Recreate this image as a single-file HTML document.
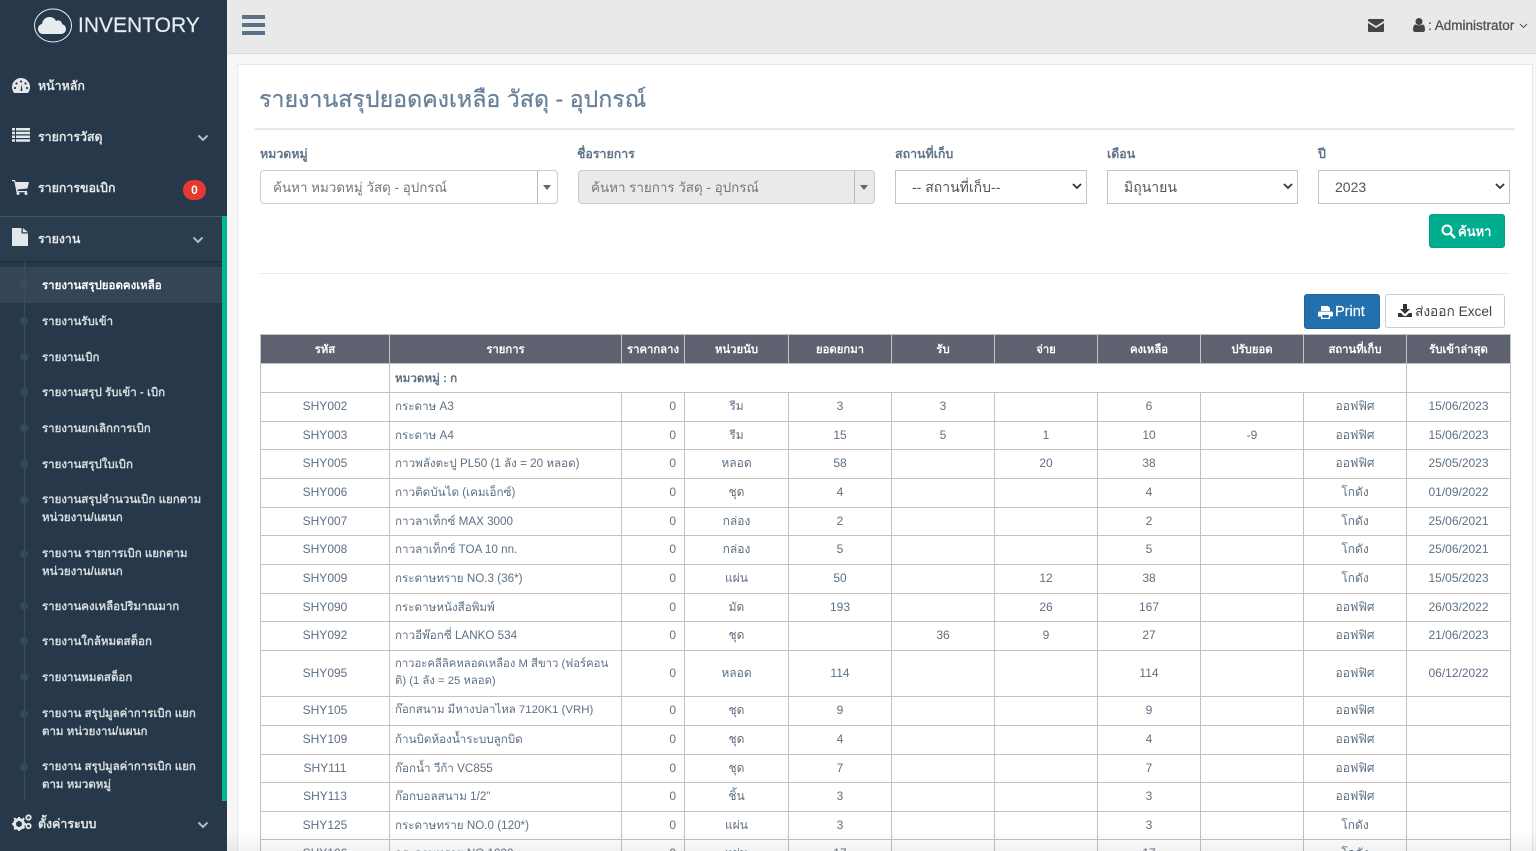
<!DOCTYPE html>
<html lang="th"><head><meta charset="utf-8"><title>Inventory</title>
<style>
*{box-sizing:border-box}
html,body{margin:0;padding:0;width:1536px;height:851px;overflow:hidden;background:#f7f7f7;font-family:"Liberation Sans",sans-serif;color:#73879c;font-size:13px}
#wrap{position:relative;width:1536px;height:851px;overflow:hidden;background:#f7f7f7}
.a{position:absolute;white-space:nowrap}
#side{position:absolute;left:0;top:0;width:227px;height:851px;background:#26384a;overflow:hidden;color:#e7e7e7;z-index:3}
.m{position:absolute;left:38px;font-size:12.4px;font-weight:bold;color:#e4e7ea;line-height:18px;white-space:nowrap}
.s{position:absolute;left:42px;margin-top:2px;font-size:11.5px;color:#d5dade;line-height:17.5px;white-space:nowrap;font-weight:bold}
.d{position:absolute;left:20px;width:8px;height:8px;border-radius:50%;background:#34495b}
.chev{position:absolute;width:12px;height:8px}
#top{position:absolute;left:227px;top:0;width:1309px;height:54px;background:#e9e9e9;border-bottom:1px solid #d9dee4}
#card{position:absolute;left:237px;top:64px;width:1296px;height:800px;background:#fff;border:1px solid #e6e9ed}
label{position:absolute;top:146px;font-size:12.4px;font-weight:bold;color:#5f7489;line-height:16px;white-space:nowrap}
.sel{position:absolute;top:170px;height:34px;background:#fff;border:1px solid #c4c4c4;font-size:14px;color:#555;line-height:32px;padding-left:16px;white-space:nowrap}
.sel svg{position:absolute;right:4px;top:12px}
.cb{position:absolute;top:170px;height:34px;border:1px solid #ccc;border-radius:4px;font-size:13.4px;color:#777;line-height:33px;padding-left:12px;white-space:nowrap}
.cb i{position:absolute;right:19px;top:0;bottom:0;width:1px;background:#bbb}
.cb b{position:absolute;right:6px;top:14px;border-left:4px solid transparent;border-right:4px solid transparent;border-top:5px solid #666}
table{position:absolute;left:260px;top:334px;width:1250px;border-collapse:collapse;table-layout:fixed;font-size:12px;color:#5e7083}
td,th{border:1px solid #c2c2c2;padding:0 5px 1px;text-align:center;line-height:17px;overflow:hidden}
th{background:#5e6170;color:#fff;font-size:11.3px;font-weight:bold;border-color:#c2c2c2;padding:2px 5px 0}
td.l{text-align:left;font-size:11.65px}td.r{text-align:right;padding-right:8px}
</style></head><body><div id="wrap">
<div id="top">
<svg class="a" style="left:15px;top:15px" width="23" height="20" viewBox="0 0 23 20"><path d="M0 0h23v4H0zM0 8h23v4H0zM0 16h23v4H0z" fill="#5a7187"/></svg>
<svg class="a" style="left:1141px;top:19px" width="16" height="13" viewBox="0 0 16 13"><path d="M1 0h14a1 1 0 0 1 1 1v1L8 7 0 2V1a1 1 0 0 1 1-1zM0 4l8 5 8-5v8a1 1 0 0 1-1 1H1a1 1 0 0 1-1-1z" fill="#444"/></svg>
<svg class="a" style="left:1186px;top:18px" width="12" height="14" viewBox="0 0 12 14"><circle cx="6" cy="3.500" r="3.500" fill="#444"/><path d="M0 12c0-4 1-5.500 3-5.500 1 1 5 1 6 0 2 0 3 1.500 3 5.500 0 1-1 2-2 2H2c-1 0-2-1-2-2z" fill="#444"/></svg>
<div class="a" style="left:1201px;top:17px;font-size:13.5px;line-height:17px;color:#515356;-webkit-text-stroke:.3px #515356">: Administrator</div>
<svg class="a" style="left:1292px;top:23px" width="9" height="6" viewBox="0 0 9 6"><path d="M1 1l3.500 3.500L8 1" fill="none" stroke="#555" stroke-width="1"/></svg>
</div>

<div id="card"></div>
<div class="a" style="left:259px;top:83px;font-size:23.2px;line-height:32px;color:#6a8199;-webkit-text-stroke:.3px #6a8199">รายงานสรุปยอดคงเหลือ วัสดุ - อุปกรณ์</div>
<div class="a" style="left:255px;top:128px;width:1260px;height:2px;background:#e6e9ed"></div>

<label style="left:260px">หมวดหมู่</label>
<label style="left:577px">ชื่อรายการ</label>
<label style="left:895px">สถานที่เก็บ</label>
<label style="left:1107px">เดือน</label>
<label style="left:1318px">ปี</label>

<div class="cb" style="left:260px;width:298px">ค้นหา หมวดหมู่ วัสดุ - อุปกรณ์<i></i><b></b></div>
<div class="cb" style="left:578px;width:297px;background:#eaeaea">ค้นหา รายการ วัสดุ - อุปกรณ์<i></i><b></b></div>
<div class="sel" style="left:895px;width:192px">-- สถานที่เก็บ--<svg width="10" height="7" viewBox="0 0 10 7"><path d="M1 1l4 4 4-4" fill="none" stroke="#333" stroke-width="1.800"/></svg></div>
<div class="sel" style="left:1107px;width:191px">มิถุนายน<svg width="10" height="7" viewBox="0 0 10 7"><path d="M1 1l4 4 4-4" fill="none" stroke="#333" stroke-width="1.800"/></svg></div>
<div class="sel" style="left:1318px;width:192px">2023<svg width="10" height="7" viewBox="0 0 10 7"><path d="M1 1l4 4 4-4" fill="none" stroke="#333" stroke-width="1.800"/></svg></div>

<div class="a" style="left:1429px;top:214px;width:76px;height:34px;background:#00ad8e;border:1px solid #00a283;border-radius:3px;color:#fff;font-size:13px;font-weight:bold;line-height:33px;padding-left:28px">ค้นหา
<svg class="a" style="left:11px;top:9px" width="15" height="15" viewBox="0 0 15 15"><circle cx="6" cy="6" r="4.500" fill="none" stroke="#fff" stroke-width="2"/><path d="M9.500 9.500L14 14" stroke="#fff" stroke-width="2.400"/></svg></div>

<div class="a" style="left:260px;top:273px;width:1250px;height:1px;background:#e9ecef"></div>

<div class="a" style="left:1304px;top:294px;width:76px;height:35px;background:#2470ad;border:1px solid #1f659c;border-radius:3px;color:#fff;font-size:14.5px;line-height:34px;padding-left:30px;-webkit-text-stroke:.2px #fff">Print
<svg class="a" style="left:13px;top:11px" width="15" height="13" viewBox="0 0 15 13"><path d="M3 0h7l2 2v3H3zM1.500 5.500h12a1.500 1.500 0 0 1 1.500 1.500v3.500h-3V13H3v-2.500H0V7a1.500 1.500 0 0 1 1.500-1.500zM4.300 9v2.800h6.400V9z" fill="#fff" fill-rule="evenodd"/></svg></div>
<div class="a" style="left:1385px;top:294px;width:120px;height:34px;background:#fff;border:1px solid #ccc;border-radius:3px;color:#444;font-size:13.7px;line-height:33px;padding-left:29px">ส่งออก Excel
<svg class="a" style="left:12px;top:9px" width="14" height="13" viewBox="0 0 14 13"><path d="M5 0h4v5h3L7 10 2 5h3zM0 9h3l3 3h2l3-3h3v4H0z" fill="#333"/></svg></div>

<table>
<colgroup><col style="width:129px"><col style="width:232px"><col style="width:63px"><col style="width:104px"><col style="width:103px"><col style="width:103px"><col style="width:103px"><col style="width:103px"><col style="width:103px"><col style="width:103px"><col style="width:104px"></colgroup>
<tr style="height:29px"><th>รหัส</th><th>รายการ</th><th style="padding:2px 0 0">ราคากลาง</th><th>หน่วยนับ</th><th>ยอดยกมา</th><th>รับ</th><th>จ่าย</th><th>คงเหลือ</th><th>ปรับยอด</th><th>สถานที่เก็บ</th><th>รับเข้าล่าสุด</th></tr>
<tr style="height:29px"><td></td><td class="l" colspan="9" style="font-weight:bold;padding-bottom:0">หมวดหมู่ : ก</td><td></td></tr>
<tr style="height:29px"><td>SHY002</td><td class="l">กระดาษ A3</td><td class="r">0</td><td>รีม</td><td>3</td><td>3</td><td></td><td>6</td><td></td><td>ออฟฟิศ</td><td>15/06/2023</td></tr>
<tr style="height:28px"><td>SHY003</td><td class="l">กระดาษ A4</td><td class="r">0</td><td>รีม</td><td>15</td><td>5</td><td>1</td><td>10</td><td>-9</td><td>ออฟฟิศ</td><td>15/06/2023</td></tr>
<tr style="height:29px"><td>SHY005</td><td class="l">กาวพลังตะปู PL50 (1 ลัง = 20 หลอด)</td><td class="r">0</td><td>หลอด</td><td>58</td><td></td><td>20</td><td>38</td><td></td><td>ออฟฟิศ</td><td>25/05/2023</td></tr>
<tr style="height:29px"><td>SHY006</td><td class="l">กาวติดบันได (เคมเอ็กซ์)</td><td class="r">0</td><td>ชุด</td><td>4</td><td></td><td></td><td>4</td><td></td><td>โกดัง</td><td>01/09/2022</td></tr>
<tr style="height:28px"><td>SHY007</td><td class="l">กาวลาเท็กซ์ MAX 3000</td><td class="r">0</td><td>กล่อง</td><td>2</td><td></td><td></td><td>2</td><td></td><td>โกดัง</td><td>25/06/2021</td></tr>
<tr style="height:29px"><td>SHY008</td><td class="l">กาวลาเท็กซ์ TOA 10 nn.</td><td class="r">0</td><td>กล่อง</td><td>5</td><td></td><td></td><td>5</td><td></td><td>โกดัง</td><td>25/06/2021</td></tr>
<tr style="height:29px"><td>SHY009</td><td class="l">กระดาษทราย NO.3 (36*)</td><td class="r">0</td><td>แผ่น</td><td>50</td><td></td><td>12</td><td>38</td><td></td><td>โกดัง</td><td>15/05/2023</td></tr>
<tr style="height:28px"><td>SHY090</td><td class="l">กระดาษหนังสือพิมพ์</td><td class="r">0</td><td>มัด</td><td>193</td><td></td><td>26</td><td>167</td><td></td><td>ออฟฟิศ</td><td>26/03/2022</td></tr>
<tr style="height:29px"><td>SHY092</td><td class="l">กาวอีพ๊อกซี่ LANKO 534</td><td class="r">0</td><td>ชุด</td><td></td><td>36</td><td>9</td><td>27</td><td></td><td>ออฟฟิศ</td><td>21/06/2023</td></tr>
<tr style="height:46px"><td>SHY095</td><td class="l" style="white-space:nowrap;font-size:11.3px">กาวอะคลีลิคหลอดเหลือง M สีขาว (ฟอร์คอน<br>ติ) (1 ลัง = 25 หลอด)</td><td class="r">0</td><td>หลอด</td><td>114</td><td></td><td></td><td>114</td><td></td><td>ออฟฟิศ</td><td>06/12/2022</td></tr>
<tr style="height:29px"><td>SHY105</td><td class="l" style="font-size:11.45px">ก๊อกสนาม มีหางปลาไหล 7120K1 (VRH)</td><td class="r">0</td><td>ชุด</td><td>9</td><td></td><td></td><td>9</td><td></td><td>ออฟฟิศ</td><td></td></tr>
<tr style="height:29px"><td>SHY109</td><td class="l">ก้านบิดห้องน้ำระบบลูกบิด</td><td class="r">0</td><td>ชุด</td><td>4</td><td></td><td></td><td>4</td><td></td><td>ออฟฟิศ</td><td></td></tr>
<tr style="height:28px"><td>SHY111</td><td class="l">ก๊อกน้ำ วีก้า VC855</td><td class="r">0</td><td>ชุด</td><td>7</td><td></td><td></td><td>7</td><td></td><td>ออฟฟิศ</td><td></td></tr>
<tr style="height:29px"><td>SHY113</td><td class="l">ก๊อกบอลสนาม 1/2"</td><td class="r">0</td><td>ชิ้น</td><td>3</td><td></td><td></td><td>3</td><td></td><td>ออฟฟิศ</td><td></td></tr>
<tr style="height:28px"><td>SHY125</td><td class="l">กระดาษทราย NO.0 (120*)</td><td class="r">0</td><td>แผ่น</td><td>3</td><td></td><td></td><td>3</td><td></td><td>โกดัง</td><td></td></tr>
<tr style="height:29px"><td>SHY106</td><td class="l">กระดาษทราย NO.1000</td><td class="r">0</td><td>แผ่น</td><td>17</td><td></td><td></td><td>17</td><td></td><td>โกดัง</td><td></td></tr>
</table>
<div class="a" style="left:227px;top:830px;width:1309px;height:21px;background:linear-gradient(to bottom,rgba(0,0,0,0),rgba(0,0,0,.05))"></div>

<div id="side">
<svg class="a" style="left:33px;top:8px" width="40" height="35" viewBox="0 0 40 35"><ellipse cx="20" cy="17.500" rx="18.500" ry="16.500" fill="none" stroke="#e7ecef" stroke-width="1"/><path d="M10 26c-3 0-5-2.500-5-5 0-2.500 1.500-4.500 4-5 .5-4 3.500-7 7.500-7 3 0 5.500 1.500 6.500 4 1-.5 2-.8 3-.5 2 .5 3 2 3.200 3.700 2.300.5 3.800 2.500 3.800 4.800 0 2.800-2.200 5-5 5z" fill="#e7ecef"/></svg>
<div class="a" style="left:78px;top:12px;font-size:21px;line-height:28px;color:#e7ecef;-webkit-text-stroke:.2px #e7ecef">INVENTORY</div>

<svg class="a" style="left:12px;top:78px" width="18" height="15" viewBox="0 0 18 15"><path d="M9 0a9 9 0 0 1 9 9c0 2-.6 4-1.700 5.500-.2.300-.5.500-.9.500H2.600c-.4 0-.7-.2-.9-.5A9 9 0 0 1 0 9a9 9 0 0 1 9-9z" fill="#e4e7ea"/><path d="M8.500 13l1-7 1 7z" fill="#26384a"/><circle cx="9" cy="3.500" r="1.100" fill="#26384a"/><circle cx="4.500" cy="5.500" r="1.100" fill="#26384a"/><circle cx="13.500" cy="5.500" r="1.100" fill="#26384a"/><circle cx="3" cy="10" r="1.100" fill="#26384a"/><circle cx="15" cy="10" r="1.100" fill="#26384a"/></svg>
<div class="m" style="top:77px">หน้าหลัก</div>

<svg class="a" style="left:12px;top:128px" width="18" height="14" viewBox="0 0 18 14"><path d="M0 0h3v2.500H0zM4 0h14v2.500H4zM0 3.700h3v2.500H0zM4 3.700h14v2.500H4zM0 7.500h3V10H0zM4 7.500h14V10H4zM0 11.200h3v2.500H0zM4 11.200h14v2.500H4z" fill="#e4e7ea"/></svg>
<div class="m" style="top:128px">รายการวัสดุ</div>
<svg class="chev" style="left:197px;top:134px" viewBox="0 0 12 8"><path d="M1.500 1.500L6 6l4.500-4.500" fill="none" stroke="#b5bcc3" stroke-width="2"/></svg>

<svg class="a" style="left:12px;top:180px" width="17" height="15" viewBox="0 0 17 15"><path d="M0 0h3l.6 2H17l-1.500 6.500-10 1 .3 1.500H15v1.200H4.500L2.300 1.300H0z" fill="#e4e7ea"/><circle cx="6" cy="13.500" r="1.500" fill="#e4e7ea"/><circle cx="14" cy="13.500" r="1.500" fill="#e4e7ea"/></svg>
<div class="m" style="top:179px">รายการขอเบิก</div>
<div class="a" style="left:183px;top:180px;width:23px;height:20px;border-radius:10px;background:#e53a33;color:#fff;font-size:12px;font-weight:bold;line-height:20px;text-align:center">0</div>

<div class="a" style="left:0;top:216px;width:222px;height:46px;background:#2a3d4f;border-top:1px solid #45566a;border-bottom:1px solid #1c2c3a"></div>
<svg class="a" style="left:12px;top:228px" width="16" height="18" viewBox="0 0 16 18"><path d="M0 0h9.500v5.500H16V18H0zM10.800 0L16 4.300h-5.200z" fill="#e4e7ea"/></svg>
<div class="m" style="top:230px">รายงาน</div>
<svg class="chev" style="left:192px;top:236px" viewBox="0 0 12 8"><path d="M1.500 1.500L6 6l4.500-4.500" fill="none" stroke="#b5bcc3" stroke-width="2"/></svg>

<div class="a" style="left:0;top:267px;width:222px;height:36px;background:#344655"></div>
<div class="a" style="left:24px;top:262px;width:1px;height:539px;background:#3a4c5e"></div>
<div class="a" style="left:222px;top:216px;width:5px;height:585px;background:#00b894"></div>

<div class="d" style="top:281px;background:#3a4c5c"></div><div class="s" style="top:276px;color:#fff">รายงานสรุปยอดคงเหลือ</div>
<div class="d" style="top:317px"></div><div class="s" style="top:312px">รายงานรับเข้า</div>
<div class="d" style="top:353px"></div><div class="s" style="top:348px">รายงานเบิก</div>
<div class="d" style="top:388px"></div><div class="s" style="top:383px">รายงานสรุป รับเข้า - เบิก</div>
<div class="d" style="top:424px"></div><div class="s" style="top:419px">รายงานยกเลิกการเบิก</div>
<div class="d" style="top:460px"></div><div class="s" style="top:455px">รายงานสรุปใบเบิก</div>
<div class="d" style="top:496px"></div><div class="s" style="top:490px">รายงานสรุปจำนวนเบิก แยกตาม<br>หน่วยงาน/แผนก</div>
<div class="d" style="top:550px"></div><div class="s" style="top:544px">รายงาน รายการเบิก แยกตาม<br>หน่วยงาน/แผนก</div>
<div class="d" style="top:602px"></div><div class="s" style="top:597px">รายงานคงเหลือปริมาณมาก</div>
<div class="d" style="top:637px"></div><div class="s" style="top:632px">รายงานใกล้หมดสต็อก</div>
<div class="d" style="top:673px"></div><div class="s" style="top:668px">รายงานหมดสต็อก</div>
<div class="d" style="top:710px"></div><div class="s" style="top:704px">รายงาน สรุปมูลค่าการเบิก แยก<br>ตาม หน่วยงาน/แผนก</div>
<div class="d" style="top:763px"></div><div class="s" style="top:757px">รายงาน สรุปมูลค่าการเบิก แยก<br>ตาม หมวดหมู่</div>

<svg class="a" style="left:12px;top:814px" width="20" height="17" viewBox="0 0 20 17"><circle cx="7" cy="10" r="4.500" fill="none" stroke="#e4e7ea" stroke-width="3"/><path d="M6 3h2v2H6zM6 15h2v2H6zM0 9h2v2H0zM12 9h2v2h-2zM1.500 4.500l1.500-1 1.500 1.500-1.500 1.500zM10 13.500l1.500-1.500 1.500 1.500-1.500 1.500zM1.500 14.500l1.500-1.500 1.500 1.500L3 16zM10 5l1.500-1.500L13 5l-1.500 1.500z" fill="#e4e7ea"/><circle cx="16.500" cy="3.500" r="2.200" fill="none" stroke="#e4e7ea" stroke-width="1.800"/><circle cx="16.500" cy="12" r="2.200" fill="none" stroke="#e4e7ea" stroke-width="1.800"/></svg>
<div class="m" style="top:815px">ตั้งค่าระบบ</div>
<svg class="chev" style="left:197px;top:821px" viewBox="0 0 12 8"><path d="M1.500 1.500L6 6l4.500-4.500" fill="none" stroke="#b5bcc3" stroke-width="2"/></svg>
</div>
</div></body></html>
